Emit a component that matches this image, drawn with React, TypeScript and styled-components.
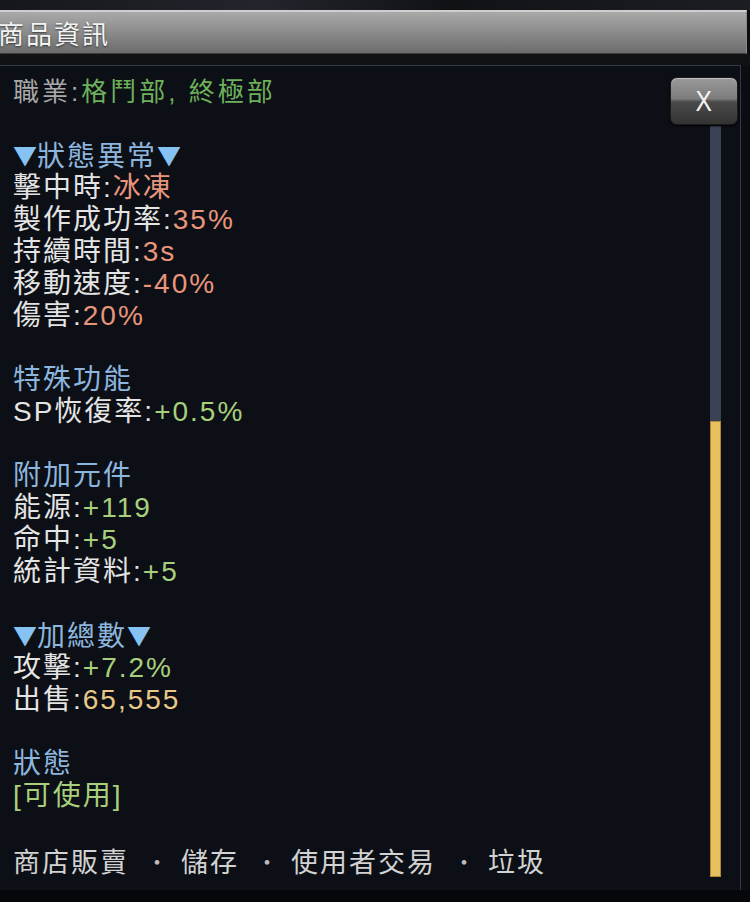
import styled, { createGlobalStyle } from 'styled-components';

const GlobalStyle = createGlobalStyle`
  html, body {
    margin: 0;
    padding: 0;
    background: #05070b;
  }
  body {
    font-family: "Liberation Sans", "Noto Sans CJK TC", sans-serif;
  }
`;

const Page = styled.div`
  width: 750px;
  height: 902px;
  display: flex;
  flex-direction: column;
  overflow: hidden;
  background: #0b0d12;
`;

const TopStrip = styled.div`
  height: 10px;
  background: linear-gradient(90deg, #15171c 0%, #22252b 35%, #101216 60%, #1c1e23 100%);
`;

const TitleBar = styled.div`
  height: 44px;
  margin-right: 3px;
  display: flex;
  align-items: center;
  box-sizing: border-box;
  border-top: 2px solid #cfcfcf;
  border-bottom: 1px solid #3c3c3c;
  border-right: 1px solid #8a8a8a;
  background: linear-gradient(180deg, #a9a9a9 0%, #8e8e8e 45%, #6c6c6c 100%);
`;

const Title = styled.span`
  margin-left: -2px;
  font-family: "Noto Sans CJK TC", sans-serif;
  font-size: 26px;
  letter-spacing: 2px;
  color: #f4f4f4;
  text-shadow: 0 1px 2px rgba(0, 0, 0, 0.6);
`;

const Gap = styled.div`
  height: 11px;
  background: #101216;
`;

const Panel = styled.div`
  position: relative;
  height: 825px;
  width: 741px;
  box-sizing: border-box;
  display: flex;
  border-top: 1px solid #343a45;
  border-right: 1px solid #343a45;
  background: #0c0f15;
`;

const Bottom = styled.div`
  flex: 1;
  background: #05070b;
`;

const Content = styled.div`
  flex: 1;
  padding: 10px 0 0 13px;
  display: flex;
  flex-direction: column;
`;

const JobLine = styled.div`
  height: 32px;
  line-height: 32px;
  font-size: 26px;
  letter-spacing: 3px;
  color: #a9a9a9;
  white-space: nowrap;
`;

const Line = styled.div`
  height: 32px;
  line-height: 32px;
  font-size: 28px;
  letter-spacing: 2px;
  color: #e4e4e4;
  white-space: nowrap;
`;

const Blank = styled.div`
  height: 32px;
`;

type Tone = 'salmon' | 'green' | 'gold' | 'job' | 'blue';

const tones: Record<Tone, string> = {
  salmon: '#e9957b',
  green: '#a8d07c',
  gold: '#e8c888',
  job: '#6eb05c',
  blue: '#8cb6de',
};

const V = styled.span<{ $tone: Tone }>`
  color: ${({ $tone }) => tones[$tone]};
`;

const Tri = styled.span`
  font-family: "Noto Sans CJK TC", sans-serif;
  color: #86c2f2;
  font-size: 24px;
  letter-spacing: 0;
  position: relative;
  top: -1px;
`;

const Footer = styled.div`
  display: flex;
  align-items: center;
  height: 32px;
  font-family: "Noto Sans CJK TC", sans-serif;
  font-size: 27px;
  letter-spacing: 2px;
  color: #d2d2d2;
  white-space: nowrap;
`;

const Dot = styled.span`
  margin: 0 11px 0 17px;
  font-size: 22px;
  color: #bdbdbd;
`;

const ScrollCol = styled.div`
  width: 11px;
  margin-right: 19px;
  padding: 60px 0 13px;
  display: flex;
  flex-direction: column;
`;

const Track = styled.div`
  height: 295px;
  background: #3a4153;
`;

const Thumb = styled.div`
  flex: 1;
  background: #e7c05f;
  box-shadow: inset 0 0 0 1px #b08a38;
`;

const CloseButton = styled.button`
  position: absolute;
  top: 11px;
  right: 2px;
  width: 68px;
  height: 48px;
  border: 1px solid #1c1c1c;
  border-radius: 7px;
  padding: 0;
  background: linear-gradient(180deg, #9a9a9a 0%, #7c7c7c 45%, #4a4a4a 52%, #333 100%);
  box-shadow: inset 0 1px 0 #bdbdbd, 0 1px 2px #000;
  color: #f2f2f2;
  font-family: "Liberation Sans", sans-serif;
  font-size: 29px;
  display: flex;
  align-items: center;
  justify-content: center;
`;

const CloseGlyph = styled.span`
  display: inline-block;
  transform: scaleX(0.85);
`;

export default function App() {
  return (
    <Page>
      <GlobalStyle />
      <TopStrip />
      <TitleBar>
        <Title>商品資訊</Title>
      </TitleBar>
      <Gap />
      <Panel>
        <Content>
          <JobLine>
            職業:<V $tone="job">格鬥部, 終極部</V>
          </JobLine>
          <Blank />
          <Line>
            <Tri>▼</Tri>
            <V $tone="blue">狀態異常</V>
            <Tri>▼</Tri>
          </Line>
          <Line>
            擊中時:<V $tone="salmon">冰凍</V>
          </Line>
          <Line>
            製作成功率:<V $tone="salmon">35%</V>
          </Line>
          <Line>
            持續時間:<V $tone="salmon">3s</V>
          </Line>
          <Line>
            移動速度:<V $tone="salmon">-40%</V>
          </Line>
          <Line>
            傷害:<V $tone="salmon">20%</V>
          </Line>
          <Blank />
          <Line>
            <V $tone="blue">特殊功能</V>
          </Line>
          <Line>
            SP恢復率:<V $tone="green">+0.5%</V>
          </Line>
          <Blank />
          <Line>
            <V $tone="blue">附加元件</V>
          </Line>
          <Line>
            能源:<V $tone="green">+119</V>
          </Line>
          <Line>
            命中:<V $tone="green">+5</V>
          </Line>
          <Line>
            統計資料:<V $tone="green">+5</V>
          </Line>
          <Blank />
          <Line>
            <Tri>▼</Tri>
            <V $tone="blue">加總數</V>
            <Tri>▼</Tri>
          </Line>
          <Line>
            攻擊:<V $tone="green">+7.2%</V>
          </Line>
          <Line>
            出售:<V $tone="gold">65,555</V>
          </Line>
          <Blank />
          <Line>
            <V $tone="blue">狀態</V>
          </Line>
          <Line>
            <V $tone="green">[可使用]</V>
          </Line>
          <Blank />
          <Footer>
            商店販賣<Dot>·</Dot>儲存<Dot>·</Dot>使用者交易<Dot>·</Dot>垃圾
          </Footer>
        </Content>
        <ScrollCol>
          <Track />
          <Thumb />
        </ScrollCol>
        <CloseButton>
          <CloseGlyph>X</CloseGlyph>
        </CloseButton>
      </Panel>
      <Bottom />
    </Page>
  );
}
